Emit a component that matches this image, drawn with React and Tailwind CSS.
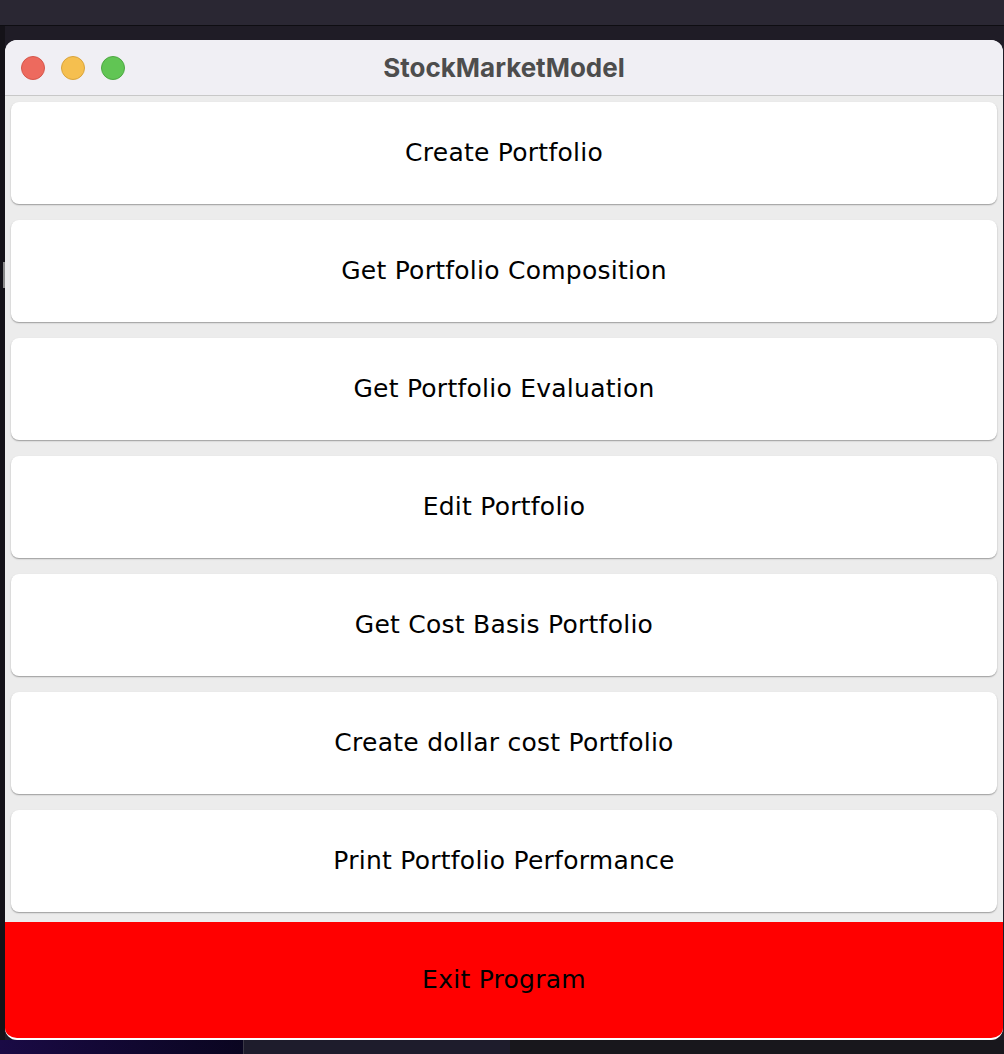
import React from "react";

const items = [
  "Create Portfolio",
  "Get Portfolio Composition",
  "Get Portfolio Evaluation",
  "Edit Portfolio",
  "Get Cost Basis Portfolio",
  "Create dollar cost Portfolio",
  "Print Portfolio Performance",
];

export default function App() {
  return (
    <div className="w-[1004px] h-[1054px] bg-[#1f1c26] relative overflow-hidden flex flex-col">
      <div className="h-[26px] bg-[#2a2733] border-b border-[#0e0d12] shrink-0"></div>
      <div className="flex flex-1 min-h-0">
        <div className="w-[5px] bg-[#141218] relative shrink-0">
          <div className="absolute left-[3px] top-[236px] w-[2px] h-[26px] bg-[#8a8a8a]"></div>
        </div>
        <div className="flex-1 flex flex-col pt-[14px]">
          <div className="flex flex-col rounded-[12px] overflow-hidden bg-[#ececec] mr-[1px] border-b-2 border-white">
            <div className="h-[56px] bg-[#f0eff4] border-b border-[#c8c8c8] relative flex items-center justify-center">
              <div className="absolute left-[16px] top-[16px] flex gap-[16px]">
                <div className="w-[24px] h-[24px] rounded-full bg-[#ed6a5e] border border-[#d5574b]"></div>
                <div className="w-[24px] h-[24px] rounded-full bg-[#f5bf4f] border border-[#d9a43c]"></div>
                <div className="w-[24px] h-[24px] rounded-full bg-[#61c554] border border-[#4ea843]"></div>
              </div>
              <span className="text-[26px] font-bold text-[#4d4d4d]" style={{ fontFamily: "Inter, 'Liberation Sans', sans-serif" }}>
                StockMarketModel
              </span>
            </div>
            <div className="flex flex-col gap-[16px] px-[6px] pt-[6px] pb-[10px]">
              {items.map((t) => (
                <div
                  key={t}
                  className="h-[102px] bg-white rounded-[8px] shadow-[0_1px_1.5px_rgba(0,0,0,0.35)] flex items-center justify-center text-[25px] tracking-[0.25px] text-black"
                  style={{ fontFamily: "'DejaVu Sans', Verdana, sans-serif" }}
                >
                  {t}
                </div>
              ))}
            </div>
            <div
              className="h-[116px] bg-[#ff0000] flex items-center justify-center text-[25px] tracking-[0.25px] text-black"
              style={{ fontFamily: "'DejaVu Sans', Verdana, sans-serif" }}
            >
              Exit Program
            </div>
          </div>
        </div>
      </div>
      <div className="absolute left-0 bottom-0 h-[14px] w-full flex">
        <div className="w-[243px] bg-gradient-to-r from-[#1a0a45] to-[#0a0520]"></div>
        <div className="w-[267px] bg-[#1e1c2c] border-l border-[#3a3846]"></div>
        <div className="flex-1 bg-[#18171c]"></div>
      </div>
    </div>
  );
}
